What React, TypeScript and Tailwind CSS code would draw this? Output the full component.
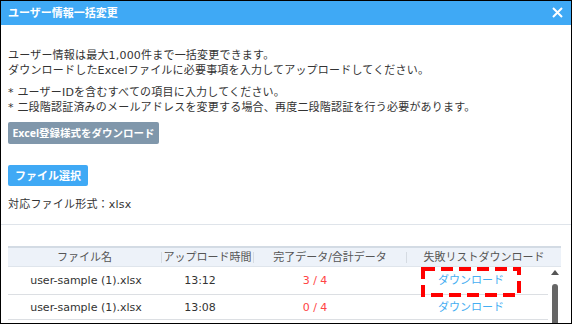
import React from "react";

const font = { fontFamily: '"DejaVu Sans", "Noto Sans CJK JP", sans-serif' };
const btnFont = { fontFamily: '"Noto Sans", "Noto Sans CJK JP", sans-serif' };

function Divider() {
  return <span className="w-px h-[11px] bg-[#d5dbe2] shrink-0" />;
}

export default function App() {
  return (
    <div
      className="w-[572px] h-[324px] border border-black bg-white flex flex-col overflow-hidden text-[11px] leading-[15px] text-[#333]"
      style={font}
    >
      <div className="h-[24px] shrink-0 bg-[#3fa9f5] flex items-center justify-between pl-[7px] pr-[8px]">
        <span className="text-white font-bold text-[11px]">ユーザー情報一括変更</span>
        <svg width="11" height="11" viewBox="0 0 11 11" className="mt-[-2px]">
          <path d="M1 1L10 10M10 1L1 10" stroke="white" strokeWidth="2" />
        </svg>
      </div>

      <div className="px-[7px] pt-[23px] flex flex-col items-start tracking-[0.2px]">
        <p>ユーザー情報は最大1,000件まで一括変更できます。</p>
        <p>ダウンロードしたExcelファイルに必要事項を入力してアップロードしてください。</p>
        <p className="mt-[7px]">* ユーザーIDを含むすべての項目に入力してください。</p>
        <p>* 二段階認証済みのメールアドレスを変更する場合、再度二段階認証を行う必要があります。</p>
        <button
          className="mt-[7px] h-[22px] w-[151px] bg-[#8097ab] text-white font-bold text-[10.5px] tracking-normal whitespace-nowrap rounded-[2px] flex items-center justify-center"
          style={btnFont}
        >
          Excel登録様式をダウンロード
        </button>
        <button
          className="mt-[21px] h-[21px] w-[80px] bg-[#3fa9f5] text-white font-bold text-[11px] tracking-normal whitespace-nowrap rounded-[2px] flex items-center justify-center"
          style={btnFont}
        >
          ファイル選択
        </button>
        <p className="mt-[11px]">対応ファイル形式：xlsx</p>
      </div>

      <div className="mt-[12px] h-px bg-[#dfe4ea] shrink-0" />

      <div className="px-[7px] mt-[21px]">
        <div className="h-[21px] w-[553px] bg-[#edf2f9] border-t-2 border-[#d3dbe4] border-b border-b-[#dfe5ec] flex items-center text-[#555]">
          <div className="w-[153px] text-center">ファイル名</div>
          <Divider />
          <div className="w-[91px] text-center">アップロード時間</div>
          <Divider />
          <div className="w-[152px] text-center">完了データ/合計データ</div>
          <Divider />
          <div className="flex-1 text-center">失敗リストダウンロード</div>
        </div>
        <div className="flex w-[553px]">
          <div className="w-[540px]">
            <div className="h-[28px] border-b border-[#dcdfe3] flex items-center">
              <div className="w-[156px] text-center">user-sample (1).xlsx</div>
              <div className="w-[72px] text-center">13:12</div>
              <div className="w-[158px] text-center text-[#f44]">3 / 4</div>
              <div className="flex-1 text-center text-[#46aef2] relative self-stretch flex items-center justify-center">
                ダウンロード
                <svg
                  className="absolute left-[27px] top-0"
                  width="100"
                  height="30"
                  viewBox="0 0 100 30"
                >
                  <rect
                    x="2"
                    y="2"
                    width="96"
                    height="26"
                    fill="none"
                    stroke="#ff0000"
                    strokeWidth="4"
                    strokeDasharray="12 6"
                  />
                </svg>
              </div>
            </div>
            <div className="h-[25px] border-b border-[#dcdfe3] flex items-center">
              <div className="w-[156px] text-center">user-sample (1).xlsx</div>
              <div className="w-[72px] text-center">13:08</div>
              <div className="w-[158px] text-center text-[#f44]">0 / 4</div>
              <div className="flex-1 text-center text-[#46aef2]">ダウンロード</div>
            </div>
          </div>
          <div className="flex-1 flex flex-col items-center pt-[3px]">
            <svg width="8" height="5" viewBox="0 0 8 5">
              <path d="M4 0L8 5H0Z" fill="#555" />
            </svg>
            <div className="mt-[9px] w-[6px] h-[60px] rounded-[3px] bg-[#666]" />
          </div>
        </div>
      </div>
    </div>
  );
}
